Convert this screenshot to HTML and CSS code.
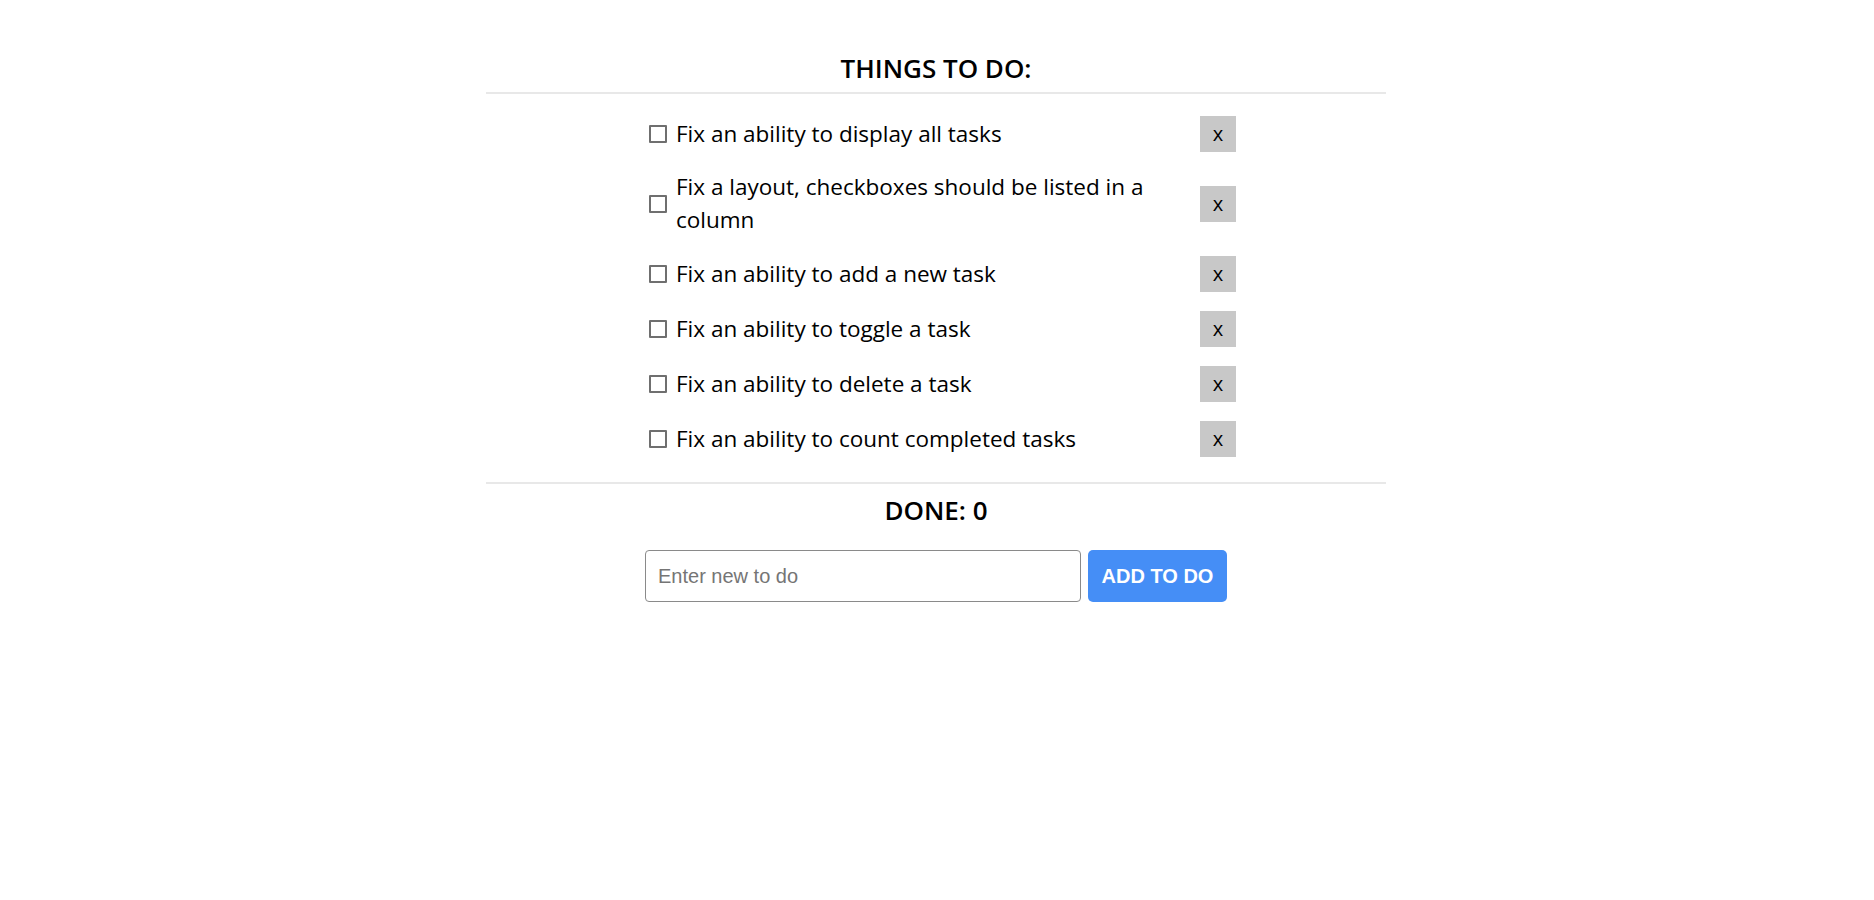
FILE: index.html
```html
<!DOCTYPE html>
<html lang="en">
<head>
<meta charset="utf-8">
<title>Things to do</title>
<link rel="stylesheet" href="styles.css">
</head>
<body>
<main class="app">
  <h2 class="heading heading-top">THINGS TO DO:</h2>
  <hr class="rule">
  <ul class="tasks">
    <li class="task"><input type="checkbox" class="check"><span class="label">Fix an ability to display all tasks</span><button class="del" type="button">x</button></li>
    <li class="task"><input type="checkbox" class="check"><span class="label">Fix a layout, checkboxes should be listed in a column</span><button class="del" type="button">x</button></li>
    <li class="task"><input type="checkbox" class="check"><span class="label">Fix an ability to add a new task</span><button class="del" type="button">x</button></li>
    <li class="task"><input type="checkbox" class="check"><span class="label">Fix an ability to toggle a task</span><button class="del" type="button">x</button></li>
    <li class="task"><input type="checkbox" class="check"><span class="label">Fix an ability to delete a task</span><button class="del" type="button">x</button></li>
    <li class="task"><input type="checkbox" class="check"><span class="label">Fix an ability to count completed tasks</span><button class="del" type="button">x</button></li>
  </ul>
  <hr class="rule">
  <h2 class="heading heading-done">DONE: 0</h2>
  <form class="add">
    <input class="add-input" type="text" placeholder="Enter new to do">
    <button class="add-btn" type="button">ADD TO DO</button>
  </form>
</main>
</body>
</html>
```
FILE: styles.css
```css
* { box-sizing: border-box; }
html, body { margin: 0; padding: 0; background: #fff; }
body {
  font-family: "Open Sans", "Noto Sans", sans-serif;
  color: #000;
}
.app {
  width: 900px;
  margin: 0 0 0 calc(50% - 451px);
  padding-top: 51px;
}
.heading {
  margin: 0;
  text-align: center;
  font-size: 26px;
  font-weight: 600;
  line-height: 35px;
}
.rule {
  margin: 0;
  border: 0;
  height: 2px;
  background: #e8e8e8;
}
.heading-top { margin-bottom: 6px; }
.tasks {
  list-style: none;
  margin: 0 0 0 163px;
  padding: 22px 0 25px;
  width: 587px;
  display: flex;
  flex-direction: column;
  gap: 19px;
}
.task {
  display: flex;
  align-items: center;
  min-height: 36px;
}
.task:nth-child(2) { margin-bottom: 1px; }
.check {
  appearance: none;
  -webkit-appearance: none;
  margin: 0 9px 0 0;
  width: 18px;
  height: 18px;
  flex: none;
  border: 2px solid #6f6f6f;
  border-radius: 1px;
  background: #fff;
}
.label {
  flex: 1;
  font-size: 22.5px;
  line-height: 32.5px;
}
.del {
  flex: none;
  width: 36px;
  height: 36px;
  margin-left: 20px;
  border: 0;
  padding: 0;
  background: #c8c8c8;
  font-family: "Open Sans", sans-serif;
  font-size: 20px;
  line-height: 36px;
  color: #000;
}
.heading-done { margin-top: 9px; }
.add {
  display: flex;
  justify-content: center;
  gap: 7px;
  margin-top: 22px;
}
.add-input {
  width: 436px;
  height: 52px;
  border: 1px solid #8a8a8a;
  border-radius: 4px;
  padding: 0 12px;
  font-family: "Liberation Sans", Arial, sans-serif;
  font-size: 20px;
  color: #000;
}
.add-input::placeholder { color: #757575; }
.add-btn {
  width: 139px;
  height: 52px;
  border: 0;
  border-radius: 5px;
  background: #458ef6;
  color: #fff;
  font-family: "Liberation Sans", Arial, sans-serif;
  font-weight: 700;
  font-size: 20px;
}
```
